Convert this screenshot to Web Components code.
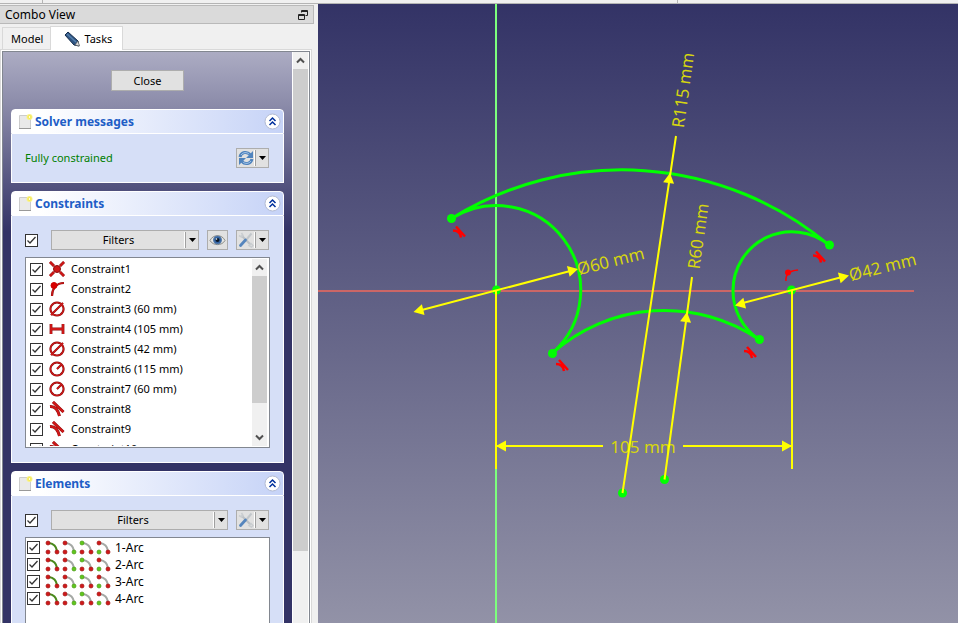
<!DOCTYPE html>
<html lang="en">
<head>
<meta charset="utf-8">
<title>Sketcher</title>
<style>
html,body{height:100%;margin:0}
body{font:11px/16px "Noto Sans","Open Sans",sans-serif;color:#000;background:#f0f0f0;overflow:hidden}
</style>
</head>
<body>
<app-window>
  <combo-view slot="dock" heading="Combo View">
    <task-panel heading="Solver messages">
      <status-row>Fully constrained</status-row>
    </task-panel>
    <task-panel heading="Constraints">
      <filter-bar visibility label="Show all constraints"></filter-bar>
      <constraint-list></constraint-list>
    </task-panel>
    <task-panel heading="Elements">
      <filter-bar label="Show all elements"></filter-bar>
      <element-list></element-list>
    </task-panel>
  </combo-view>
  <sketch-view slot="view"></sketch-view>
</app-window>
<script>
const define = (name, html, setup) => {
  const t = document.createElement('template');
  t.innerHTML = html;
  customElements.define(name, class extends HTMLElement {
    constructor() {
      super();
      this.attachShadow({mode: 'open'});
    }
    connectedCallback() {
      if (this.shadowRoot.childNodes.length) return;
      this.shadowRoot.append(t.content.cloneNode(true));
      if (setup) setup(this, this.shadowRoot);
    }
  });
};

define('app-window', `
<style>
:host{display:flex;flex-direction:column;height:100vh;background:#f0f0f0}
header{display:flex;flex:none;height:3px;border-bottom:1px solid #b4b4b4}
header i{box-sizing:border-box;border-right:1px solid #b4b4b4}
header i:first-child{width:43px}
header i:last-child{flex:1;border:0}
header i:nth-child(2){width:635px}
main{display:flex;flex:1;min-height:0;gap:4px}
</style>
<header><i></i><i></i><i></i></header>
<main><slot name="dock"></slot><slot name="view"></slot></main>`);

define('combo-view', `
<style>
:host{display:flex;flex-direction:column;flex:none;width:314px;min-height:0}
.title{display:flex;align-items:center;justify-content:space-between;box-sizing:border-box;height:19px;margin-top:1px;padding:0 5px;background:#dadada;border:1px solid #b9b9b9;border-left:0}
.title span{font-size:12px}
button{font:inherit;color:inherit;padding:0;border:0;background:none}
.title button{display:flex}
.tabs{display:flex;align-items:flex-end;box-sizing:border-box;height:25px;padding-left:2px;position:relative;z-index:1}
.tabs button{display:flex;align-items:center;box-sizing:border-box;border:1px solid #d9d9d9;border-bottom:0}
.tabs button:first-child{height:22px;padding:0 7px 0 8px;border-right:0}
.tabs button:last-child{height:24px;gap:4px;padding:0 10px 0 13px;background:#fff;margin-bottom:-1px}
.frame{display:flex;flex:1;min-height:0;box-sizing:border-box;margin-right:2px;padding:1px 1px 0;border:1px solid #d9d9d9;border-bottom:0;background:#fff}
.inner{display:flex;flex:1;min-width:0;border:1px solid #828790;border-bottom:0}
.stack{display:flex;flex-direction:column;flex:1;min-width:0;gap:8px;overflow:hidden;padding:0 8px;background:linear-gradient(#acacc3 0,#8d8dab 50px,#333366 180px)}
.close{flex:none;align-self:center;width:73px;height:21px;margin:18px 0 10px;border:1px solid #adadad;background:#e1e1e1}
</style>
<div class="title"><span></span><button aria-label="Float panel"><svg width="10" height="10" fill="none" stroke="#222"><path d="M3.500 2.500v-2h6v5h-2M3 1.500h7M.5 4.500h6v5h-6zM0 5.500h7"/></svg></button></div>
<div class="tabs" role="tablist"><button role="tab">Model</button><button role="tab" aria-selected="true"><svg width="16" height="16" viewBox="0 0 16 16"><path d="M1 4 4 1l10 9 1 5-5-1z" fill="#2f5583" stroke="#142c4c"/><path d="m3 3 9 8" stroke="#5580ad" stroke-width="1.500"/><path d="m11 14 3-4 1.500 5z" fill="#ddd" stroke="#555" stroke-width=".6"/></svg>Tasks</button></div>
<div class="frame"><div class="inner"><div class="stack"><button class="close">Close</button><slot></slot></div><scroll-bar style="--thumb:482px"></scroll-bar></div></div>`,
(h, r) => r.querySelector('.title span').textContent = h.getAttribute('heading'));

define('scroll-bar', `
<style>
:host{display:flex;flex-direction:column;flex:none;width:15px;border:solid #fff;border-width:0 1px;background:#f0f0f0}
button{display:flex;justify-content:center;align-items:center;flex:none;height:17px;border:0;padding:0;background:#f0f0f0}
i{flex:none;height:var(--thumb);background:#cdcdcd}
.down{margin-top:auto}
:host(:not([down])) .down{display:none}
svg{fill:none;stroke:#505050;stroke-width:2}
</style>
<button aria-label="Scroll up"><svg width="9" height="7"><path d="M1 5.500 4.500 2 8 5.500"/></svg></button><i></i>
<button class="down" aria-label="Scroll down"><svg width="9" height="7"><path d="M1 1.500 4.500 5 8 1.500"/></svg></button>`);

define('task-panel', `
<style>
:host{display:flex;flex-direction:column;flex:none}
header{display:flex;align-items:center;box-sizing:border-box;height:25px;padding:0 2px 0 5px;border:1px solid #fff;border-radius:4px 4px 0 0;background:linear-gradient(90deg,#fff 10%,#c6d3f7)}
h2{flex:1;margin:0 0 0 2px;font:bold 12px/16px "Noto Sans","Open Sans",sans-serif;color:#215dc6}
button{display:flex;padding:0;border:0;background:none}
section{border:solid #fff;border-width:0 1px 1px;background:#d6dff7;padding:14px 13px}
</style>
<header>
<svg width="16" height="16" viewBox="0 0 16 16"><path d="M2.500 1.500h11v13h-11z" fill="#e9e9e9" stroke="#ccc"/><path d="M2 14.500h12" stroke="#999"/><circle cx="12.500" cy="3" r="3" fill="#f9f28a"/><circle cx="12.500" cy="3" r="1.500" fill="#fffde0" stroke="#f5e73c"/></svg>
<h2></h2>
<button aria-label="Collapse"><svg width="17" height="17" viewBox="0 0 17 17"><circle cx="8.500" cy="8.500" r="7.500" fill="#fff" stroke="#b3bbd2"/><path d="m5.500 8 3-3 3 3M5.500 12l3-3 3 3" fill="none" stroke="#00309c" stroke-width="1.500"/></svg></button>
</header><section><slot></slot></section>`,
(h, r) => r.querySelector('h2').textContent = h.getAttribute('heading'));

define('tool-button', `
<style>
:host{display:flex;flex:none}
button{display:flex;flex:1;align-items:center;justify-content:center;box-sizing:border-box;height:20px;padding:0;border:1px solid #adadad;background:#e1e1e1;font:inherit;color:inherit}
span{display:flex;flex:1;justify-content:center}
b{display:flex;align-items:center;justify-content:center;width:12px;height:16px;border-left:1px solid #a0a0a0;box-shadow:-1px 0 #fff}
:host(:not([menu])) b{display:none}
</style>
<button><span><slot></slot></span><b><svg width="7" height="4"><path d="M0 0h7L3.500 4z"/></svg></b></button>`,
(h, r) => { if (h.title) r.querySelector('button').setAttribute('aria-label', h.title); });

define('status-row', `
<style>
:host{display:flex;align-items:center;justify-content:space-between;height:20px;margin-right:1px;color:#008000}
tool-button{width:33px}
</style>
<span><slot></slot></span>
<tool-button menu title="Update"><svg width="16" height="16" viewBox="0 0 16 16"><g fill="none" stroke="#4f83bd" stroke-width="3"><path d="M2 7C3 2 9 1 12 4.500M14 9C13 14 7 15 4 11.500"/></g><path d="M15 1v7H8zM1 15V8h7z" fill="#4f83bd"/><path d="M3 5c2-3 6-3 8-1M13 11c-2 3-6 3-8 1" fill="none" stroke="#a5c5e8"/></svg></tool-button>`);

define('filter-bar', `
<style>
:host{display:flex;align-items:center;height:20px;gap:8px;margin:0 1px 7px 0}
.filters{flex:1;margin-left:5px}
.eye{width:21px}
.tools{width:33px}
:host(:not([visibility])) .eye{display:none}
</style>
<check-box></check-box>
<tool-button class="filters" menu>Filters</tool-button>
<tool-button class="eye" title="Show or hide"><svg width="17" height="14" viewBox="0 0 17 14"><path d="M1 7.500C4 1 13 1 16 7.500 13 13 4 13 1 7.500z" fill="#e6e6e3" stroke="#8b8d88"/><circle cx="8.500" cy="7" r="4" fill="#3465a4" stroke="#5a7ca8"/><circle cx="8.500" cy="7" r="2" fill="#0a1625"/><circle cx="7.500" cy="6" r=".8" fill="#fff"/></svg></tool-button>
<tool-button class="tools" menu title="Settings"><svg width="16" height="16" viewBox="0 0 16 16" fill="none"><path d="m3.500 3.500 9 9" stroke="#bcc1c5" stroke-width="2.200"/><path d="M1 3.500 3.500 5 5 3.500 3.500 1M11 13.500l2-2 2 2-1.500 1.500z" stroke="#c9cdd0" stroke-width="1.500"/><path d="m8.500 7.500 5-6" stroke="#c2c7cb" stroke-width="2"/><path d="m2.500 13.500 5-5.500" stroke="#5585bd" stroke-width="2.800" stroke-linecap="round"/></svg></tool-button>`,
(h, r) => r.querySelector('check-box').setAttribute('label', h.getAttribute('label')));

define('check-box', `
<style>
:host{display:flex;flex:none}
label{display:flex;align-items:center;white-space:nowrap;gap:var(--gap,6px)}
input{appearance:none;box-sizing:border-box;width:13px;height:13px;margin:0;border:1px solid #333;background:#fff url("data:image/svg+xml,%3Csvg xmlns='http://www.w3.org/2000/svg' width='11' height='11'%3E%3Cpath d='M1.500 5.500 4 8l5.500-6' fill='none' stroke='%23333' stroke-width='1.300'/%3E%3C/svg%3E")}
</style>
<label><input type="checkbox" checked><slot></slot></label>`,
(h, r) => { if (h.getAttribute('label')) r.querySelector('input').setAttribute('aria-label', h.getAttribute('label')); });

const red = (inner) => `<svg width="16" height="16" viewBox="0 0 16 16" fill="none" stroke="#8c0c0c">${inner}</svg>`;
const two = (d, w) => `<path d="${d}" stroke="#8c0c0c" stroke-width="${w + .8}"/><path d="${d}" stroke="#d01818" stroke-width="${w - .2}"/>`;
const icons = {
  coincident: red(two('M1 1l4 4M15 1l-4 4M1 15l4-4M15 15l-4-4', 2) + '<circle cx="8" cy="8" r="3.500" fill="#d01818"/>'),
  onobject: red(two('M3 15C3 8 7 2 15 2', 1.4) + '<circle cx="5" cy="4.500" r="3" fill="#d80000" stroke="#c00"/>'),
  diameter: red(two('M8 1.500a6.500 6.500 0 1 0 .01 0zM2 14l12-12', 1.3)),
  distance: red(two('M2 3v10M14 3v10M2 8h12', 2)),
  radius: red(two('M8 1.500a6.500 6.500 0 1 0 .01 0zM8 8l4-4', 1.3)),
  tangent: red(two('M4 1 14.500 11M1 5.500Q8 5 10.500 15', 2.2))
};

define('constraint-list', `
<style>
:host{display:flex;height:187px;border:1px solid #828790;background:#fff;padding:1px}
ul{flex:1;margin:0;padding:0 0 0 3px;list-style:none;overflow:hidden}
li{display:flex;height:20px}
check-box{--gap:6px}
span{display:flex;align-items:center;gap:6px}
scroll-bar{--thumb:127px}
</style>
<ul></ul><scroll-bar down></scroll-bar>`, (h, r) => {
  const rows = [['coincident','Constraint1'],['onobject','Constraint2'],['diameter','Constraint3 (60 mm)'],['distance','Constraint4 (105 mm)'],['diameter','Constraint5 (42 mm)'],['radius','Constraint6 (115 mm)'],['radius','Constraint7 (60 mm)'],['tangent','Constraint8'],['tangent','Constraint9'],['tangent','Constraint10']];
  r.querySelector('ul').innerHTML = rows.map(([i, t]) => `<li><check-box><span>${icons[i]}${t}</span></check-box></li>`).join('');
});

define('element-list', `
<style>
:host{display:block;height:104px;border:1px solid #828790;background:#fff;padding:1px 1px 0;font-size:12px}
ul{margin:0;padding:0;list-style:none}
li{display:flex;height:17px}
check-box{--gap:5px}
span{display:flex;align-items:center;gap:2px}
em{font-style:normal;margin-left:2px}
</style>
<ul></ul>`, (h, r) => {
  const R = '#d01818', G = '#5fc81a';
  const arc = (line, a, b, c) => `<svg width="15" height="15" viewBox="0 0 15 15"><path d="M4 3Q11 4 12 11" fill="none" stroke="${line}" stroke-width="2"/>` +
    [[a, 3, 3], [b, 3, 12], [c, 12, 12]].map(([f, x, y]) => `<circle cx="${x}" cy="${y}" r="2" fill="${f}" stroke="${f === R ? '#a01414' : '#4a9a18'}" stroke-width=".7"/>`).join('') + '</svg>';
  const set = arc('#4a8a1c', R, R, R) + arc('#a5a9a5', R, R, G) + arc('#a5a9a5', G, R, R) + arc('#a5a9a5', R, G, R);
  r.querySelector('ul').innerHTML = [1, 2, 3, 4].map(n => `<li><check-box><span>${set}<em>${n}-Arc</em></span></check-box></li>`).join('');
});

define('sketch-view', `
<style>
:host{display:block;flex:1;min-width:0;overflow:hidden;background:linear-gradient(#333366,#9292a7)}
svg{display:block;width:100%;height:100%}
text{font:17px "Noto Sans","Open Sans",sans-serif;fill:#d6d60f;text-anchor:middle}
.curve{fill:none;stroke:#0f0;stroke-width:3}
.pt{fill:#0f0}
.dim{stroke:#ff0;stroke-width:2;fill:none}
.head{fill:#ff0}
.mark{fill:none;stroke:#f00;stroke-width:2.500}
</style>
<svg role="img" aria-label="Sketch">
<defs><g id="tan"><path class="mark" d="M-3-6 6 4M-6-2Q1-2 2 5"/></g></defs>
<g transform="translate(-318 -4)">
<path d="M318 291H914" stroke="#cb6666" stroke-width="2"/>
<path d="M496 4V1200" stroke="#7dff7d" stroke-width="2"/>
<path class="curve" d="M451.500 218.500A323 323 0 0 1 829 245M451.500 218.500A84.400 84.400 0 0 1 552.500 353M552.500 353A168.500 168.500 0 0 1 759 339.500M829 245A58.800 58.800 0 0 0 733 290.500A58.800 58.800 0 0 0 759 339.500"/>
<g class="pt"><circle cx="451.500" cy="218.500" r="4.500"/><circle cx="829.500" cy="245" r="4.500"/><circle cx="552.500" cy="353.500" r="4.500"/><circle cx="759.500" cy="339.500" r="4.500"/><circle cx="496.500" cy="290" r="4.500"/><circle cx="791.500" cy="290" r="4.500"/><circle cx="622.500" cy="493" r="4.500"/><circle cx="664.500" cy="479.500" r="4.500"/></g>
<g>
<text transform="translate(643 453)">105 mm</text>
<text transform="translate(612 267) rotate(-14)">Ø60 mm</text>
<text transform="translate(884 273) rotate(-14)">Ø42 mm</text>
<text transform="translate(689 91) rotate(-82)">R115 mm</text>
<text transform="translate(704 237) rotate(-82)">R60 mm</text>
</g>
<g class="dim"><path d="M496 290V469M792 290V469M497 446H603M683 446H791M418 311 574 270M739 304 846 276M622.500 493 676 136M664.500 479.500 692 277"/></g>
<g class="head"><path d="M496 446l10-5.500v11z"/><path d="M792 446l-10-5.500v11z"/>
<path d="M0 0-10-5.500V5.500z" transform="translate(578 269) rotate(-14)"/><path d="M0 0-10-5.500V5.500z" transform="translate(413.500 312) rotate(166)"/>
<path d="M0 0-10-5.500V5.500z" transform="translate(849 275.500) rotate(-14)"/><path d="M0 0-10-5.500V5.500z" transform="translate(735 305.500) rotate(166)"/>
<path d="M0 0-10-5.500V5.500z" transform="translate(670 173) rotate(-82)"/><path d="M0 0-10-5.500V5.500z" transform="translate(687 312) rotate(-82)"/></g>
<use href="#tan" x="459" y="232.500"/><use href="#tan" x="562" y="366"/><use href="#tan" x="819" y="257.500"/><use href="#tan" x="750" y="353"/>
<path class="mark" d="M786 281Q785 271 798 270" style="stroke-width:1.500"/><circle cx="788" cy="272.500" r="3" fill="red"/>
</g></svg>`);
</script>
</body>
</html>
